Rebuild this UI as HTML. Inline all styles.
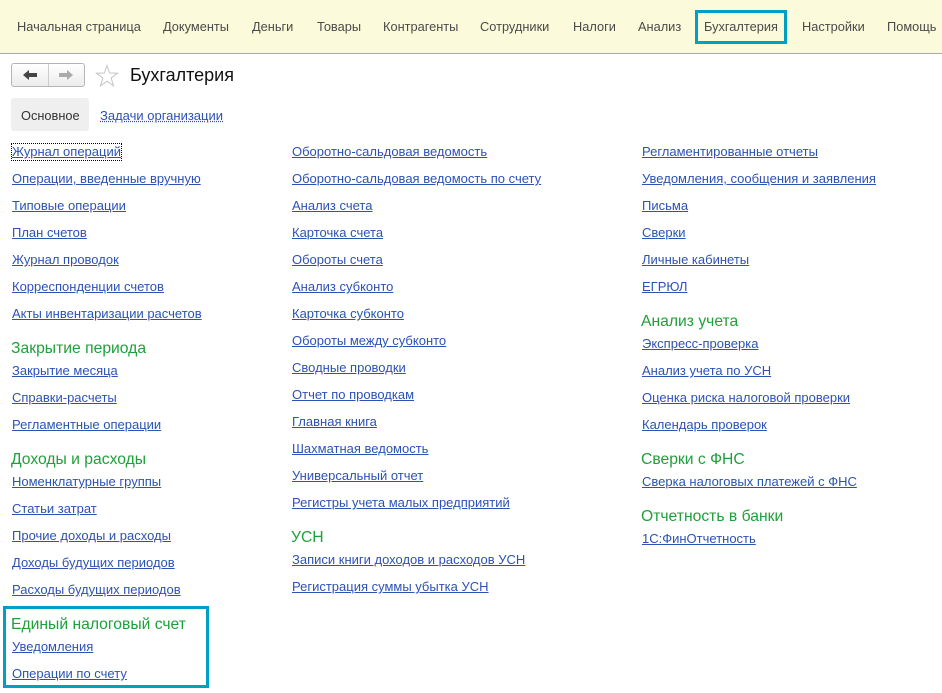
<!DOCTYPE html>
<html><head><meta charset="utf-8"><style>
body{margin:0;width:942px;height:693px;background:#fff;position:relative;overflow:hidden;font-family:"Liberation Sans",Arial,sans-serif}
.top{position:absolute;left:0;top:0;width:942px;height:53px;background:#fbfbdb;border-bottom:1px solid #a8a8a8}
.m{position:absolute;top:19px;font-size:12.8px;color:#4a4a4a;line-height:16px;white-space:nowrap}
.sel{position:absolute;left:695px;top:10px;width:86px;height:28px;border:3px solid #00a0c4}
a,.l{position:absolute;font-size:13px;color:#2d52b5;text-decoration:underline;line-height:16px;white-space:nowrap;margin-top:1px}
.h{position:absolute;font-size:15.7px;color:#1ea03a;line-height:18px;white-space:nowrap;margin-top:1px}
</style></head><body>
<div class="top"></div>
<span class="m" style="left:17px">Начальная страница</span>
<span class="m" style="left:163px">Документы</span>
<span class="m" style="left:252px">Деньги</span>
<span class="m" style="left:317px">Товары</span>
<span class="m" style="left:383px">Контрагенты</span>
<span class="m" style="left:480px">Сотрудники</span>
<span class="m" style="left:573px">Налоги</span>
<span class="m" style="left:638px">Анализ</span>
<span class="m" style="left:704px">Бухгалтерия</span>
<span class="m" style="left:802px">Настройки</span>
<span class="m" style="left:887px">Помощь</span>
<div class="sel"></div>

<div style="position:absolute;left:11px;top:63px;width:72px;height:22px;border:1px solid #b5b5b5;border-radius:3px;background:linear-gradient(#fff,#ececec)"></div>
<div style="position:absolute;left:48px;top:64px;width:1px;height:22px;background:#ccc"></div>
<svg style="position:absolute;left:22px;top:69px" width="16" height="12"><path d="M1 6 L7 1 L7 4 L15 4 L15 8 L7 8 L7 11 Z" fill="#444"/></svg>
<svg style="position:absolute;left:58px;top:69px" width="16" height="12"><path d="M15 6 L9 1 L9 4 L1 4 L1 8 L9 8 L9 11 Z" fill="#aaa"/></svg>
<svg style="position:absolute;left:95px;top:64px" width="24" height="24"><path d="M12 1.5 L14.6 9 L22.5 9.2 L16.2 14 L18.5 21.8 L12 17.2 L5.5 21.8 L7.8 14 L1.5 9.2 L9.4 9 Z" fill="none" stroke="#c4c4c4" stroke-width="1"/></svg>
<div style="position:absolute;left:130px;top:64px;font-size:18px;color:#111;line-height:22px">Бухгалтерия</div>

<div style="position:absolute;left:11px;top:98px;width:78px;height:33px;background:#efefef;border-radius:3px"></div>
<div style="position:absolute;left:21px;top:108px;font-size:12.8px;color:#333;line-height:16px">Основное</div>
<a style="left:100px;top:107px;text-decoration:underline dotted">Задачи организации</a>

<a style="left:12px;top:143px;outline:1px dotted #000">Журнал операций</a>
<a style="left:12px;top:170px">Операции, введенные вручную</a>
<a style="left:12px;top:197px">Типовые операции</a>
<a style="left:12px;top:224px">План счетов</a>
<a style="left:12px;top:251px">Журнал проводок</a>
<a style="left:12px;top:278px">Корреспонденции счетов</a>
<a style="left:12px;top:305px">Акты инвентаризации расчетов</a>
<div class="h" style="left:11px;top:339px">Закрытие периода</div>
<a style="left:12px;top:362px">Закрытие месяца</a>
<a style="left:12px;top:389px">Справки-расчеты</a>
<a style="left:12px;top:416px">Регламентные операции</a>
<div class="h" style="left:11px;top:450px">Доходы и расходы</div>
<a style="left:12px;top:473px">Номенклатурные группы</a>
<a style="left:12px;top:500px">Статьи затрат</a>
<a style="left:12px;top:527px">Прочие доходы и расходы</a>
<a style="left:12px;top:554px">Доходы будущих периодов</a>
<a style="left:12px;top:581px">Расходы будущих периодов</a>
<div style="position:absolute;left:3px;top:606px;width:200px;height:76px;border:3px solid #00a0c4"></div>
<div class="h" style="left:11px;top:615px">Единый налоговый счет</div>
<a style="left:12px;top:638px">Уведомления</a>
<a style="left:12px;top:665px">Операции по счету</a>

<a style="left:292px;top:143px">Оборотно-сальдовая ведомость</a>
<a style="left:292px;top:170px">Оборотно-сальдовая ведомость по счету</a>
<a style="left:292px;top:197px">Анализ счета</a>
<a style="left:292px;top:224px">Карточка счета</a>
<a style="left:292px;top:251px">Обороты счета</a>
<a style="left:292px;top:278px">Анализ субконто</a>
<a style="left:292px;top:305px">Карточка субконто</a>
<a style="left:292px;top:332px">Обороты между субконто</a>
<a style="left:292px;top:359px">Сводные проводки</a>
<a style="left:292px;top:386px">Отчет по проводкам</a>
<a style="left:292px;top:413px">Главная книга</a>
<a style="left:292px;top:440px">Шахматная ведомость</a>
<a style="left:292px;top:467px">Универсальный отчет</a>
<a style="left:292px;top:494px">Регистры учета малых предприятий</a>
<div class="h" style="left:291px;top:528px">УСН</div>
<a style="left:292px;top:551px">Записи книги доходов и расходов УСН</a>
<a style="left:292px;top:578px">Регистрация суммы убытка УСН</a>

<a style="left:642px;top:143px">Регламентированные отчеты</a>
<a style="left:642px;top:170px">Уведомления, сообщения и заявления</a>
<a style="left:642px;top:197px">Письма</a>
<a style="left:642px;top:224px">Сверки</a>
<a style="left:642px;top:251px">Личные кабинеты</a>
<a style="left:642px;top:278px">ЕГРЮЛ</a>
<div class="h" style="left:641px;top:312px">Анализ учета</div>
<a style="left:642px;top:335px">Экспресс-проверка</a>
<a style="left:642px;top:362px">Анализ учета по УСН</a>
<a style="left:642px;top:389px">Оценка риска налоговой проверки</a>
<a style="left:642px;top:416px">Календарь проверок</a>
<div class="h" style="left:641px;top:450px">Сверки с ФНС</div>
<a style="left:642px;top:473px">Сверка налоговых платежей с ФНС</a>
<div class="h" style="left:641px;top:507px">Отчетность в банки</div>
<a style="left:642px;top:530px">1С:ФинОтчетность</a>
</body></html>
